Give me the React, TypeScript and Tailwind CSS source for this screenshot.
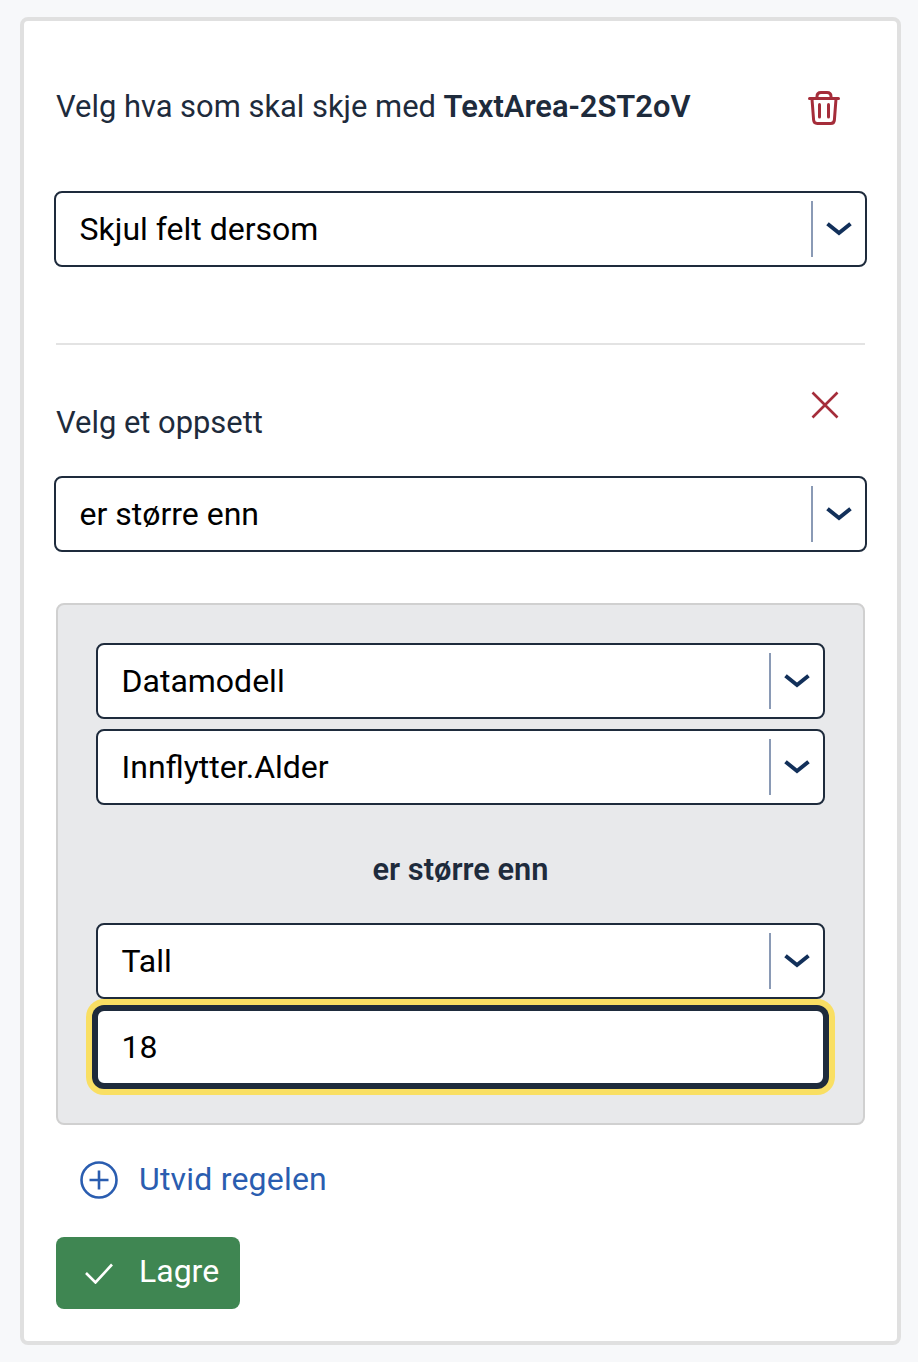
import React from 'react';

function Chevron() {
  return (
    <svg width="26" height="14" viewBox="0 0 26 14" fill="none" aria-hidden>
      <path d="M1.5 1.8 L13 11 L24.5 1.8" stroke="#12305a" strokeWidth="4" />
    </svg>
  );
}

function Select({ value }: { value: string }) {
  return (
    <div className="flex h-[76px] items-center justify-between rounded-lg border-2 border-[#1e2b3c] bg-white pl-[23.5px] text-[32px] text-black">
      <span>{value}</span>
      <div className="flex h-full items-center py-2">
        <div className="h-full w-[2px] bg-[#8a9ab5]" />
        <div className="flex w-[52px] items-center justify-center">
          <Chevron />
        </div>
      </div>
    </div>
  );
}

function TrashIcon() {
  return (
    <svg width="32" height="34" viewBox="0 0 32 34" fill="none" stroke="#a52d3a" strokeWidth="3" strokeLinecap="round" aria-hidden>
      <path d="M1.5 7.5 H30.5" />
      <path d="M9 7 V5.5 C9 3 10.5 1.5 13 1.5 H19 C21.5 1.5 23 3 23 5.5 V7" />
      <path d="M4 8 L5.6 29 C5.8 31.2 7 32.5 9.2 32.5 H22.8 C25 32.5 26.2 31.2 26.4 29 L28 8" />
      <path d="M11.5 13.5 V26" />
      <path d="M20.5 13.5 V26" />
    </svg>
  );
}

export default function App() {
  return (
    <div className="min-h-[1362px] bg-[#f7f8fa] pt-[17px] pr-[17px] pl-5 font-['Roboto',sans-serif]">
      <div className="flex h-[1328px] flex-col rounded-lg border-4 border-[#e0e0e0] bg-white px-8">
        <div className="flex h-[170px] shrink-0 items-start justify-between pt-[64px] pr-[25px]">
          <p className="text-[30.9px] leading-[44px] text-[#1e2b3c]">
            Velg hva som skal skje med <strong className="font-semibold">TextArea-2ST2oV</strong>
          </p>
          <button type="button" className="mt-[6px]" aria-label="Slett">
            <TrashIcon />
          </button>
        </div>

        <div className="-mx-[2px]">
          <Select value="Skjul felt dersom" />
        </div>

        <div className="mt-[76px] h-[2px] shrink-0 bg-[#e3e3e3]" />

        <div className="flex h-[131px] shrink-0 items-start justify-between pr-[26px]">
          <p className="pt-[56px] text-[30.9px] leading-[44px] text-[#1e2b3c]">Velg et oppsett</p>
          <button type="button" className="mt-[46px]" aria-label="Fjern">
            <svg width="28" height="28" viewBox="0 0 28 28" fill="none" stroke="#a52d3a" strokeWidth="2.6" aria-hidden>
              <path d="M1.5 1.5 L26.5 26.5 M26.5 1.5 L1.5 26.5" />
            </svg>
          </button>
        </div>

        <div className="-mx-[2px]">
          <Select value="er større enn" />
        </div>

        <div className="mt-[51px] rounded-lg border-2 border-[#d0d0d0] bg-[#e8e9eb] p-[38px]">
          <div className="flex flex-col gap-[10px]">
            <Select value="Datamodell" />
            <Select value="Innflytter.Alder" />
          </div>
          <p className="flex h-[118px] items-center justify-center pt-3 text-[30.8px] font-semibold text-[#1e2b3c]">er større enn</p>
          <div className="flex flex-col gap-[10px]">
            <Select value="Tall" />
            <input
              readOnly
              value="18"
              className="h-[76px] w-full rounded-lg border-2 border-[#1e2b3c] bg-white pl-[23.5px] text-[32px] text-black shadow-[0_0_0_4px_#1e2b3c,0_0_0_10px_#f9df63] outline-none"
            />
          </div>
        </div>

        <button type="button" className="mt-[34px] flex h-[42px] items-center gap-[21px] self-start pl-[24px] text-[32px] tracking-[0.2px] text-[#2a5db0]">
          <svg width="38" height="38" viewBox="0 0 38 38" fill="none" stroke="#2a5db0" strokeWidth="2.6" aria-hidden>
            <circle cx="19" cy="19" r="17.5" />
            <path d="M9.5 19 H28.5 M19 9.5 V28.5" />
          </svg>
          <span className="-mt-[2px]">Utvid regelen</span>
        </button>

        <button type="button" className="mt-[36px] flex h-[72px] w-[184px] items-center gap-[26px] rounded-lg bg-[#3f8652] pl-[29px] text-[32px] leading-[68px] text-white">
          <svg width="28" height="21" viewBox="0 0 28 21" fill="none" stroke="#ffffff" strokeWidth="2.6" aria-hidden>
            <path d="M1 10 L10.5 19.5 L27 1.5" />
          </svg>
          <span className="-mt-[4px]">Lagre</span>
        </button>
      </div>
    </div>
  );
}
